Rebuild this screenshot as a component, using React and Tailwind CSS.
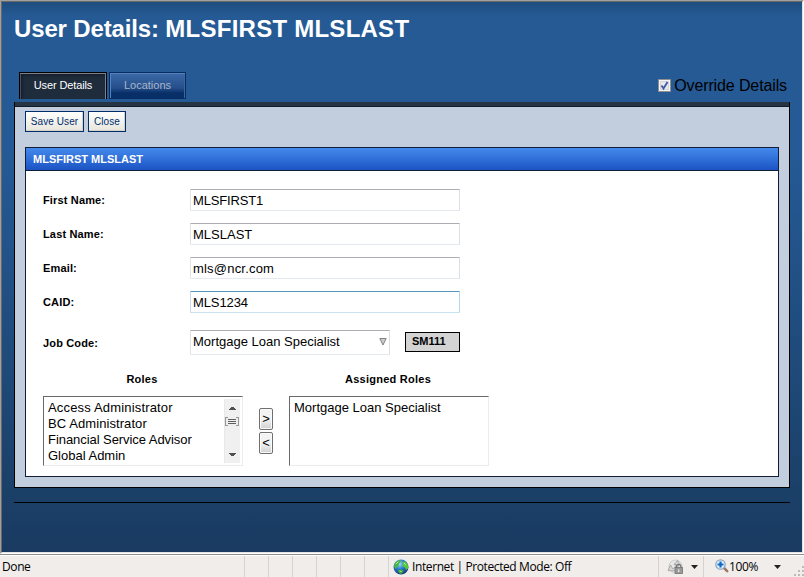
const fields = [
  { label: "First Name:", value: "MLSFIRST1", tracking: "tracking-[-0.15px]" },
  { label: "Last Name:", value: "MLSLAST", tracking: "tracking-normal" },
  { label: "Email:", value: "mls@ncr.com", tracking: "tracking-[0.2px]" },
  { label: "CAID:", value: "MLS1234", tracking: "tracking-[-0.1px]", focused: true },
];

const roles = [
  { name: "Access Administrator", tracking: "tracking-[0.17px]" },
  { name: "BC Administrator", tracking: "tracking-[0.08px]" },
  { name: "Financial Service Advisor", tracking: "tracking-[-0.06px]" },
  { name: "Global Admin", tracking: "tracking-normal" },
];

const assignedRoles = [{ name: "Mortgage Loan Specialist", tracking: "tracking-normal" }];

function Field({ label, value, tracking, focused }) {
  return (
    <div className="flex h-[22px] items-center">
      <span className="w-[147px] text-[11px] font-bold tracking-[0.15px]">{label}</span>
      <div
        className={
          "h-[22px] w-[270px] rounded-[1px] border pl-[2px] text-[13px] leading-[21px] " +
          tracking +
          (focused
            ? " border-t-[#5794bf] border-r-[#b7d5ea] border-b-[#c7e2f1] border-l-[#c5daed]"
            : " border-t-[#abadb3] border-r-[#dbdfe6] border-b-[#e3e9ef] border-l-[#e2e3ea]")
        }
      >
        {value}
      </div>
    </div>
  );
}

function ActionButton({ width, children }) {
  return (
    <button
      className={
        "h-[21px] border border-[#002d6b] bg-linear-to-b from-white to-[#e6e6dc] text-center text-[10px] leading-[19px] tracking-[0.1px] text-[#002d6b] shadow-[inset_-1px_-1px_0_#d6d0c5] " +
        width
      }
    >
      {children}
    </button>
  );
}

function MoveButton({ children }) {
  return (
    <button className="h-[22px] w-[14px] rounded-[2px] border border-[#707070] bg-linear-to-b from-[#f3f3f3] from-50% to-[#d0d0d0] text-[13px] leading-[20px] shadow-[inset_0_0_0_1px_#fafafa]">
      <span className="-mx-2 block text-center">{children}</span>
    </button>
  );
}

function ListBox({ items, scroll }) {
  return (
    <div className="flex h-[70px] w-[200px] justify-between border border-t-[#696969] border-r-[#ececec] border-b-[#ececec] border-l-[#696969] pt-[2px] pr-[2px] pb-[2px] pl-[4px]">
      <ul className="pt-px text-[13px] leading-[16px] whitespace-nowrap">
        {items.map((r) => (
          <li key={r.name} className={r.tracking}>
            {r.name}
          </li>
        ))}
      </ul>
      {scroll && (
        <svg width="16" height="64" viewBox="0 0 16 64" className="bg-[#f0f0f0]" shapeRendering="crispEdges">
          <path d="M0 0h1v64H0z" fill="#e8e8e8" />
          <path d="M5 11h7v-1h-1v-1h-1v-1H7v1H6v1H5z" fill="#505050" />
          <path d="M5 54h7v1h-1v1h-1v1H7v-1H6v-1H5z" fill="#505050" />
          <rect x="1.5" y="18.5" width="13" height="8" rx="1" fill="#eee" stroke="#999" />
          <path d="M4 20.5h8M4 22.5h8M4 24.5h8" stroke="#606060" />
          <path d="M4 18.5h8M4 26.5h8" stroke="#eee" />
        </svg>
      )}
    </div>
  );
}

function Globe() {
  return (
    <svg width="16" height="16" viewBox="0 0 16 16" className="shrink-0">
      <defs>
        <radialGradient id="sea" cx="0.4" cy="0.3" r="0.7">
          <stop offset="0" stopColor="#9edcf8" />
          <stop offset="0.5" stopColor="#2779cc" />
          <stop offset="1" stopColor="#163b83" />
        </radialGradient>
      </defs>
      <circle cx="8" cy="8" r="7.5" fill="url(#sea)" />
      <path d="M2 4.5 5 1.5 8 1l-.5 2L6 4.500 5.500 7 3.500 8.500 3 10 1 8z" fill="#48b83c" />
      <path d="M10 2.500 12.500 2.500 15 6v3.500L13 11l-1-2.500L9.500 7.500 10 5z" fill="#55c739" />
      <path d="M5 11.500 8 10.500l2.500 1L10 13.500 7.500 15 5.500 13.500z" fill="#3eaa35" />
      <path d="M3 5 5.500 2.500M11 4l2 2M6.500 12l2 .5" stroke="#b8f080" strokeWidth="1" />
    </svg>
  );
}

function PrivacyIcon() {
  return (
    <svg width="18" height="16" viewBox="0 0 18 16">
      <circle cx="8.500" cy="7.500" r="6.500" fill="#e8e8e8" stroke="#cecece" />
      <path d="M1 11.500 3.500 6 5.500 9.500c2 0 3-1.500 3.500-4H7L10.500 1.500 13 6h-1.500C11 9 9 11.500 6 12z" fill="#d6d6d6" stroke="#939393" strokeWidth=".7" />
      <path d="M9.500 9V7.500a2.200 2.200 0 0 1 4.400 0V9" fill="none" stroke="#777" strokeWidth="1.300" />
      <rect x="8" y="8.500" width="7.500" height="6" fill="#999" stroke="#747474" strokeWidth=".8" />
      <path d="M11.700 10.500v2.500" stroke="#eee" strokeWidth="1.200" />
    </svg>
  );
}

function ZoomIcon() {
  return (
    <svg width="14" height="14" viewBox="0 0 14 14" className="-mt-[2px] shrink-0">
      <path d="m8.500 8.500 3.700 3.700" stroke="#9a7965" strokeWidth="2.500" strokeLinecap="round" />
      <circle cx="5.500" cy="5.500" r="4.700" fill="#e4f2fc" stroke="#8ba6bd" strokeWidth="1.200" />
      <path d="M5.500 2.500v6M2.500 5.500h6" stroke="#1268c4" strokeWidth="2.200" />
    </svg>
  );
}

function Caret() {
  return (
    <svg width="7" height="4" viewBox="0 0 7 4">
      <path d="M0 0h7L3.500 4z" fill="#222" />
    </svg>
  );
}

export default function App() {
  return (
    <div className="flex h-[577px] w-[804px] flex-col overflow-hidden bg-white font-['Liberation_Sans',Arial,sans-serif] text-black">
      <div className="h-[554px] border border-t-[#a0a0a0] border-r-white border-b-white border-l-[#a0a0a0]">
        <div className="flex h-[552px] flex-col border border-t-[#696969] border-r-[#e3e3e3] border-b-[#e3e3e3] border-l-[#696969] bg-[linear-gradient(to_bottom,#1f4d7e_0px,#255a94_14px,#255a96_150px,#1b4068_490px,#1a3a61_552px)] px-3">
          <div className="flex h-[550px] w-[788px] flex-col">
            <h1 className="h-[70px] pt-[12px] text-[24px] leading-[30px] font-bold whitespace-nowrap text-white">
              <span className="tracking-[-0.15px]">User Details: </span>
              <span className="tracking-[0.25px]">MLSFIRST MLSLAST</span>
            </h1>

            <div className="flex h-[30px] w-[776px] justify-between">
              <nav className="flex gap-[2px] pl-[5px] text-center text-[11px] leading-[25px]">
                <div className="h-[27px] w-[88px] border border-b-0 border-black bg-[#1f2c3b] tracking-[-0.12px] text-white shadow-[inset_-1px_1px_0_#7b818a,inset_1px_0_0_#48515d,inset_2px_2px_3px_#111a25]">
                  User Details
                </div>
                <div className="h-[27px] w-[77px] border border-[#072c61] bg-linear-to-b from-[#3c69a8] via-[#254f8b] via-60% to-[#082f68] to-80% text-[#a9b5c8] shadow-[inset_1px_1px_0_#5683bd,inset_-1px_0_0_#3b66a0]">
                  Locations
                </div>
              </nav>
              <label className="flex h-[27px] items-center gap-[3px] pr-[3px] text-[16px] tracking-[-0.12px]">
                <svg width="13" height="13" viewBox="0 0 13 13">
                  <path d="M0 0h13v13H0z" fill="#8e8f8f" />
                  <path d="M1 1h11v11H1z" fill="#f4f4f4" />
                  <path d="M2.500 2.500h8v8h-8z" fill="#e6e9ed" stroke="#d0d4da" />
                  <path d="m3.500 6.500 2 3L9.500 3" fill="none" stroke="#4059a0" strokeWidth="1.800" />
                </svg>
                <span className="whitespace-nowrap">Override Details</span>
              </label>
            </div>

            <main className="flex h-[386px] w-[776px] flex-col border border-t-0 border-black bg-[#c2cddd]">
              <div className="h-[5px] shrink-0 border-b border-[#111c29] bg-[#263444]" />
              <div className="flex h-[40px] shrink-0 gap-1 px-[10px] pt-1">
                <ActionButton width="w-[59px]">Save User</ActionButton>
                <ActionButton width="w-[38px]">Close</ActionButton>
              </div>

              <section className="mx-[10px] h-[330px] w-[754px] shrink-0 border border-[#101f38] bg-white">
                <h2 className="h-[23px] border-b border-[#101f38] bg-linear-to-b from-[#458aec] to-[#1c53c4] pl-[7px] text-[11px] leading-[23px] font-bold text-white">
                  MLSFIRST MLSLAST
                </h2>

                <div className="flex flex-col gap-3 pt-[18px] pl-[17px]">
                  {fields.map((f) => (
                    <Field key={f.label} {...f} />
                  ))}
                </div>

                <div className="mt-[17px] flex h-[25px] items-center pl-[17px]">
                  <span className="w-[147px] pt-[2px] text-[11px] font-bold tracking-[0.15px]">Job Code:</span>
                  <div className="flex h-[25px] w-[200px] justify-between rounded-[1px] border border-t-[#abadb3] border-r-[#dbdfe6] border-b-[#e3e9ef] border-l-[#e2e3ea] pr-[2px] pl-[2px] text-[13px] leading-[22px]">
                    Mortgage Loan Specialist
                    <svg width="8" height="8" viewBox="0 0 8 8" className="mt-[7px]">
                      <path d="M.8.500h6.400L4 7z" fill="#ccc" stroke="#777" strokeWidth=".9" />
                    </svg>
                  </div>
                  <div className="-mt-px ml-[15px] h-[20px] w-[55px] border border-black bg-[#d3d3d3] pl-[6px] text-[11px] leading-[17px] font-bold">
                    SM111
                  </div>
                </div>

                <div className="mt-[17px] flex pl-[17px] text-center text-[11px] leading-[14px] font-bold tracking-[0.25px]">
                  <span className="w-[198px]">Roles</span>
                  <span className="ml-[48px] w-[198px]">Assigned Roles</span>
                </div>

                <div className="mt-[10px] flex pl-[17px]">
                  <ListBox items={roles} scroll />
                  <div className="flex w-[46px] flex-col items-center gap-[2px] pt-3">
                    <MoveButton>&gt;</MoveButton>
                    <MoveButton>&lt;</MoveButton>
                  </div>
                  <ListBox items={assignedRoles} />
                </div>
              </section>
            </main>
            <hr className="mt-[14px] w-[776px] border-t border-black" />
          </div>
        </div>
      </div>

      <footer className="flex h-[23px] border-t border-[#8c8c8c] bg-[#f0edeb] pt-px font-['Open_Sans','Noto_Sans',sans-serif] text-[12px] leading-[21px] tracking-[-0.4px] shadow-[inset_0_1px_0_#fff]">
        <span className="w-[244px] pl-[2px]">Done</span>
        {[0, 1, 2, 3, 4, 5].map((n) => (
          <span key={n} className="w-[24px] border-l border-[#d5d3d1]" />
        ))}
        <div className="flex w-[270px] items-center gap-[3px] border-l border-[#d5d3d1] pl-1 whitespace-nowrap">
          <Globe />
          Internet | Protected Mode: Off
        </div>
        <div className="flex w-[45px] items-center gap-[6px] border-l border-[#d5d3d1] pl-[8px]">
          <PrivacyIcon />
          <Caret />
        </div>
        <div className="flex w-[101px] items-center border-l border-[#d5d3d1] pl-[11px]">
          <ZoomIcon />
          <span className="w-[45px]">100%</span>
          <Caret />
          <svg width="10" height="10" viewBox="0 0 10 10" className="mt-[9px] ml-[13px]">
            <path d="M8 0h2v2H8zM4 4h2v2H4zM8 4h2v2H8zM0 8h2v2H0zM4 8h2v2H4zM8 8h2v2H8z" fill="#bdbab7" />
          </svg>
        </div>
      </footer>
    </div>
  );
}
